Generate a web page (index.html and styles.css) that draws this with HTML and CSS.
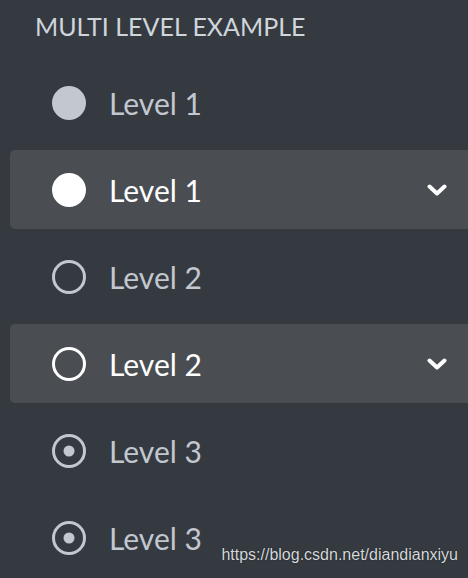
FILE: index.html
```html
<!DOCTYPE html>
<html>
<head>
<meta charset="utf-8">
<link rel="stylesheet" href="styles.css">
</head>
<body>
<div class="sidebar">
  <div class="header">MULTI LEVEL EXAMPLE</div>
  <ul class="nav">
    <li class="item">
      <svg class="icon" viewBox="0 0 34 34"><circle cx="17" cy="17" r="17" fill="currentColor"/></svg>
      <span class="label">Level 1</span>
    </li>
    <li class="item active">
      <svg class="icon" viewBox="0 0 34 34"><circle cx="17" cy="17" r="17" fill="currentColor"/></svg>
      <span class="label">Level 1</span>
      <svg class="chev" viewBox="0 0 20 12"><path d="M2.5 2.5 L10 9.5 L17.5 2.5" fill="none" stroke="currentColor" stroke-width="4" stroke-linecap="round" stroke-linejoin="round"/></svg>
    </li>
    <li class="item">
      <svg class="icon" viewBox="0 0 34 34"><circle cx="17" cy="17" r="15.5" fill="none" stroke="currentColor" stroke-width="3"/></svg>
      <span class="label">Level 2</span>
    </li>
    <li class="item active">
      <svg class="icon" viewBox="0 0 34 34"><circle cx="17" cy="17" r="15.5" fill="none" stroke="currentColor" stroke-width="3"/></svg>
      <span class="label">Level 2</span>
      <svg class="chev" viewBox="0 0 20 12"><path d="M2.5 2.5 L10 9.5 L17.5 2.5" fill="none" stroke="currentColor" stroke-width="4" stroke-linecap="round" stroke-linejoin="round"/></svg>
    </li>
    <li class="item">
      <svg class="icon" viewBox="0 0 34 34"><circle cx="17" cy="17" r="15.5" fill="none" stroke="currentColor" stroke-width="3"/><circle cx="17" cy="17" r="5.5" fill="currentColor"/></svg>
      <span class="label">Level 3</span>
    </li>
    <li class="item">
      <svg class="icon" viewBox="0 0 34 34"><circle cx="17" cy="17" r="15.5" fill="none" stroke="currentColor" stroke-width="3"/><circle cx="17" cy="17" r="5.5" fill="currentColor"/></svg>
      <span class="label">Level 3</span>
    </li>
  </ul>
</div>
<div class="watermark">https://blog.csdn.net/diandianxiyu</div>
</body>
</html>
```
FILE: styles.css
```css
html, body {
  margin: 0;
  padding: 0;
  background: #343a40;
  height: 100%;
  overflow: hidden;
}
body {
  font-family: "Lato", "Open Sans", sans-serif;
  color: #c2c7d0;
  position: relative;
}
.sidebar {
  padding-left: 10px;
}
.header {
  padding: 9px 0 0 25px;
  height: 63px;
  box-sizing: border-box;
  font-size: 25px;
  line-height: 34px;
  color: #d0d4db;
}
.nav {
  list-style: none;
  margin: 0 -8px 0 0;
  padding: 0;
  display: flex;
  flex-direction: column;
  gap: 8px;
}
.item {
  height: 79px;
  display: flex;
  align-items: center;
  padding: 0 29px 0 42px;
  border-radius: 5px;
  color: #c2c7d0;
}
.item.active {
  background: #4a4e53;
  color: #ffffff;
}
.icon {
  width: 34px;
  height: 34px;
  flex: none;
}
.label {
  margin-left: 23px;
  font-size: 30px;
  line-height: 36px;
  flex: 1;
}
.chev {
  width: 20px;
  height: 12px;
  flex: none;
}
.watermark {
  position: absolute;
  right: 10px;
  top: 546px;
  font-family: "Liberation Sans", Arial, sans-serif;
  font-size: 16px;
  color: #d8dade;
  text-shadow: 0 0 1px #000;
}
```
